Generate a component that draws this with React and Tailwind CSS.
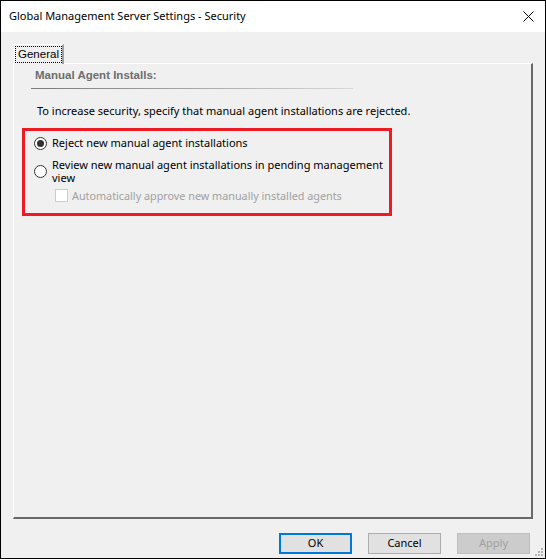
import React from "react";

const ui = { fontFamily: '"Noto Sans", "Open Sans", sans-serif' };
const classic = { fontFamily: '"Liberation Sans", Arial, sans-serif' };

const Radio = ({ checked }) => (
  <span className="w-[13px] h-[13px] rounded-full border border-[#333333] bg-white flex items-center justify-center shrink-0">
    {checked && <span className="w-[7px] h-[7px] rounded-full bg-[#333333]" />}
  </span>
);

const Button = ({ children, primary, disabled }) => (
  <button
    className={
      primary
        ? "w-[73px] h-[21px] border-2 border-[#0078d7] bg-[#e1e1e1] text-[11px] text-black"
        : disabled
        ? "w-[73px] h-[21px] border border-[#bfbfbf] bg-[#cccccc] text-[11px] text-[#a0a0a0]"
        : "w-[73px] h-[21px] border border-[#adadad] bg-[#e1e1e1] text-[11px] text-black"
    }
    style={ui}
  >
    {children}
  </button>
);

const Grip = () => (
  <svg width="10" height="10" viewBox="0 0 10 10" className="absolute right-[1px] bottom-[1px]">
    {[
      [7, 1], [4, 4], [7, 4], [1, 7], [4, 7], [7, 7],
    ].map(([x, y], i) => (
      <rect key={i} x={x} y={y} width="2" height="2" fill="#b4b4b4" />
    ))}
  </svg>
);

export default function App() {
  return (
    <div className="w-[546px] h-[559px] border border-black flex flex-col bg-[#f0f0f0] relative" style={ui}>
      {/* title bar */}
      <div className="h-[31px] bg-white flex items-center justify-between pl-[8px] pr-[11px] shrink-0">
        <span className="text-[11px] text-black">Global Management Server Settings - Security</span>
        <svg width="11" height="11" viewBox="0 0 11 11">
          <path d="M0.5 0.5 L10.5 10.5 M10.5 0.5 L0.5 10.5" stroke="#000" strokeWidth="1" />
        </svg>
      </div>

      <div className="flex-1 flex flex-col px-[12px] pt-[12px]">
        {/* tab */}
        <div className="flex">
          <div className="h-[20px] w-[50px] ml-[1px] border-t border-l border-white border-r-2 border-r-[#a0a0a0] bg-[#f0f0f0] flex items-start justify-center pt-[1px] -mb-[1px] relative z-10">
            <span className="border border-dotted border-black px-[2px] leading-[15px] text-[11.5px] text-black" style={classic}>
              General
            </span>
          </div>
        </div>

        {/* panel */}
        <div className="h-[456px] border-t border-l border-white border-r-2 border-b-2 border-r-[#696969] border-b-[#696969] flex flex-col pl-[20px] pt-[3px]">
          <div className="text-[11.5px] font-bold text-[#6d6d6d] leading-[16px] pl-[1px]" style={classic}>
            Manual Agent Installs:
          </div>
          <div className="h-[1px] w-[322px] -ml-[3px] mt-[5px] bg-gradient-to-r from-[#7a7a7a] to-[#d8d8d8]" />

          <div className="mt-[14px] pl-[3px] text-[11px] text-black leading-[16px]">
            To increase security, specify that manual agent installations are rejected.
          </div>

          <div className="mt-[9px] -ml-[12px] w-[370px] h-[88px] border-[3px] border-[#ed1c24] pl-[9px] pt-[4px] flex flex-col">
            <div className="flex items-center gap-[5px] h-[16px]">
              <Radio checked />
              <span className="text-[11px] text-black">Reject new manual agent installations</span>
            </div>
            <div className="flex items-center gap-[5px] mt-[7px]">
              <Radio />
              <span className="text-[11px] text-black leading-[13px]">
                Review new manual agent installations in pending management
                <br />
                view
              </span>
            </div>
            <div className="flex items-center gap-[4px] ml-[21px] mt-[5px]">
              <span className="w-[13px] h-[13px] border border-[#cccccc] bg-white shrink-0" />
              <span className="text-[10.8px] text-[#a0a0a0] leading-[13px]">
                Automatically approve new manually installed agents
              </span>
            </div>
          </div>
        </div>

        {/* buttons */}
        <div className="flex justify-end gap-[16px] mt-[14px] pr-[3px]">
          <Button primary>OK</Button>
          <Button>Cancel</Button>
          <Button disabled>Apply</Button>
        </div>
      </div>
      <Grip />
    </div>
  );
}
